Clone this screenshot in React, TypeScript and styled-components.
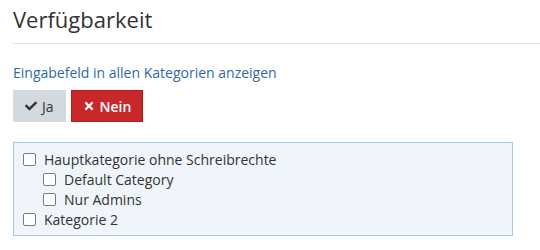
import React from "react";
import styled, { createGlobalStyle } from "styled-components";
import { FaCheck, FaTimes } from "react-icons/fa";

const Global = createGlobalStyle`
  html, body { margin: 0; padding: 0; background: #fff; }
  body { font-family: "Open Sans", "Noto Sans", sans-serif; color: #333; }
`;

const Page = styled.div`
  padding: 0 0 0 13px;
`;

const Title = styled.h2`
  margin: 0;
  padding-top: 4px;
  font-size: 22px;
  font-weight: 400;
  line-height: 30px;
  color: #333;
  padding-bottom: 9px;
  border-bottom: 1px solid #e2e2e2;
`;

const Label = styled.div`
  margin-top: 19px;
  font-size: 14px;
  line-height: 19px;
  color: #2e6aa6;
`;

const ButtonRow = styled.div`
  display: flex;
  gap: 5px;
  margin-top: 8px;
`;

const ToggleButton = styled.button<{ $variant: "neutral" | "danger" }>`
  display: flex;
  align-items: center;
  gap: 5px;
  height: 32px;
  padding: 0 11px;
  font-family: inherit;
  font-size: 14px;
  font-weight: ${(p) => (p.$variant === "danger" ? 600 : 400)};
  border: 1px solid ${(p) => (p.$variant === "danger" ? "#a81f1f" : "#d2dae0")};
  background: ${(p) => (p.$variant === "danger" ? "#c9282a" : "#d2dae0")};
  color: ${(p) => (p.$variant === "danger" ? "#fff" : "#333")};
  cursor: pointer;
  svg { font-size: 12px; }
`;

const CategoryBox = styled.div`
  margin-top: 20px;
  padding: 6px 9px;
  box-sizing: content-box;
  width: 480px;
  background: #eff5fa;
  border: 1px solid #aac9e5;
`;

const Item = styled.label<{ $level: number }>`
  display: flex;
  align-items: center;
  gap: 8px;
  height: 20px;
  padding-left: ${(p) => p.$level * 20}px;
  font-size: 14px;
  color: #333;
`;

const Box = styled.span`
  width: 11px;
  height: 11px;
  border: 1.5px solid #7a7a80;
  border-radius: 2px;
  background: #fff;
  flex: none;
`;

const items = [
  { label: "Hauptkategorie ohne Schreibrechte", level: 0 },
  { label: "Default Category", level: 1 },
  { label: "Nur Admins", level: 1 },
  { label: "Kategorie 2", level: 0 },
];

export default function App() {
  return (
    <>
      <Global />
      <Page>
        <Title>Verfügbarkeit</Title>
        <Label>Eingabefeld in allen Kategorien anzeigen</Label>
        <ButtonRow>
          <ToggleButton $variant="neutral">
            <FaCheck /> Ja
          </ToggleButton>
          <ToggleButton $variant="danger">
            <FaTimes /> Nein
          </ToggleButton>
        </ButtonRow>
        <CategoryBox>
          {items.map((it) => (
            <Item key={it.label} $level={it.level}>
              <Box />
              {it.label}
            </Item>
          ))}
        </CategoryBox>
      </Page>
    </>
  );
}
